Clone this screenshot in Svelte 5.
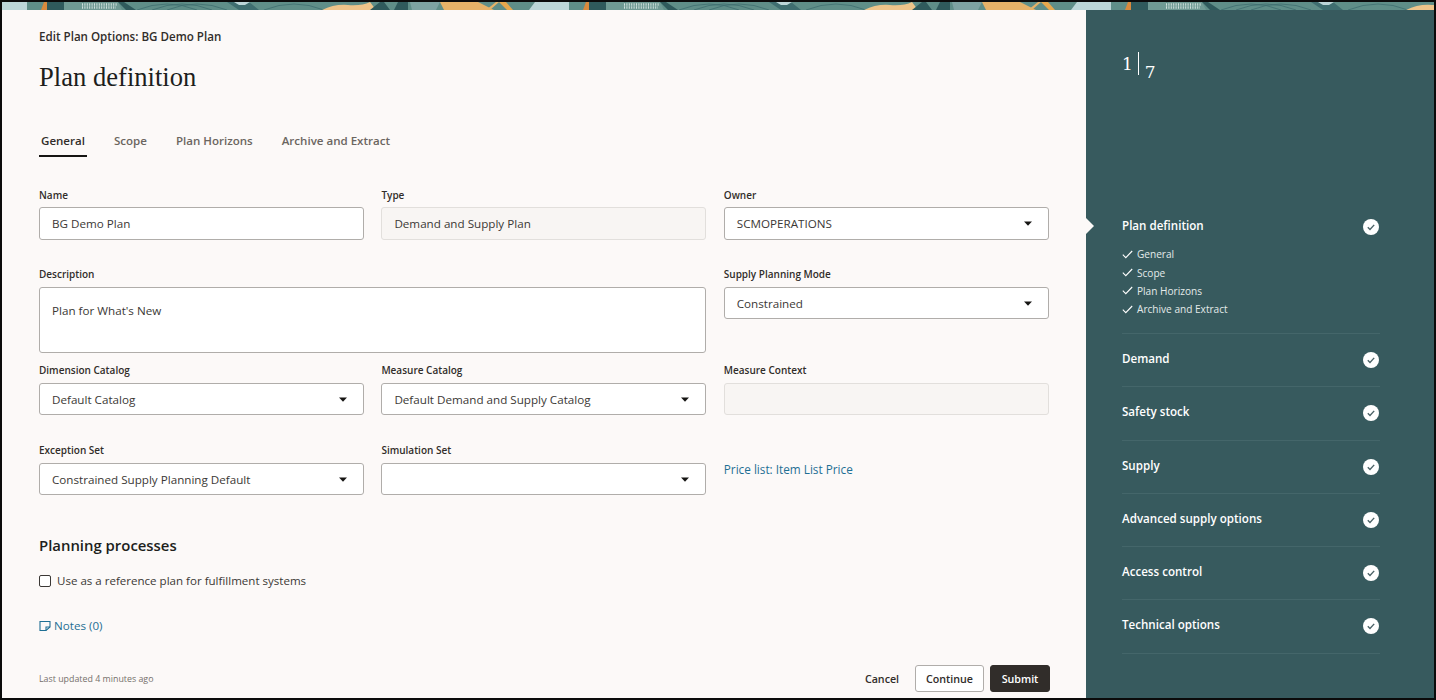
<script>
    const tabs = ['General', 'Scope', 'Plan Horizons', 'Archive and Extract'];
    const subSteps = ['General', 'Scope', 'Plan Horizons', 'Archive and Extract'];
    const steps = ['Demand', 'Safety stock', 'Supply', 'Advanced supply options', 'Access control', 'Technical options'];
    // the banner artwork repeats every 542px
    const tileOffsets = [-542, 0, 542, 1084];
</script>

{#snippet caret()}
    <svg class="caret" width="8" height="5" viewBox="0 0 8 5"><path d="M0 0.5h8L4 4.8z" fill="#161513" /></svg>
{/snippet}

{#snippet select(value)}
    <div class="input select">
        <span>{value}</span>
        {@render caret()}
    </div>
{/snippet}

{#snippet stepCheck()}
    <svg class="step-check" width="16" height="16" viewBox="0 0 16 16">
        <circle cx="8" cy="8" r="8" fill="#fff" />
        <path d="M4.8 8.3l2.2 2.2 4.2-4.6" fill="none" stroke="#4a6266" stroke-width="1.4" />
    </svg>
{/snippet}

<div class="frame">
    <svg class="banner" width="1432" height="8" viewBox="0 0 1432 8">
        <rect width="1432" height="8" fill="#5f8e88" />
        {#each tileOffsets as x}
            <g transform="translate({x} 0)">
                <path d="M527 8l6-8h34v8z" fill="#bcd6d8" />
                <path d="M39 8l3-8h5l-2 8z" fill="#d98a3d" />
                <path d="M45 0h17v8H45z" fill="#2f5a5c" />
                <path d="M62 0h18v8H62z" fill="#6f9a94" />
                <path d="M78 8l4-8h34l4 8z" fill="#6f9a94" />
                <path d="M80 2.5h36M80 5.5h34" stroke="#cfe0dc" stroke-width="2.5" stroke-dasharray="1 1.4" />
                <path d="M116 0h6l12 8h-10z" fill="#2f5a5c" />
                <path d="M135 8q30-12 60 0M150 8q30-12 60 0M165 8q30-12 60 0" fill="none" stroke="#3f6e70" stroke-width="0.8" />
                <path d="M225 0h22l10 8h-20z" fill="#3f6e70" />
                <path d="M232 0h16l-5 3h-6z" fill="#bcd6d8" />
                <path d="M262 8q30-12 60 0" fill="none" stroke="#3f6e70" stroke-width="0.8" />
                <path d="M320 8q12-6 26-5t22-3l6 8z" fill="#eec48a" />
                <path d="M368 8l10-8h4l6 8z" fill="#2f5a5c" />
                <path d="M392 8l4-8h10v8z" fill="#2f5a5c" />
                <path d="M408 0h30l-4 8h-24z" fill="#7ea3a2" />
                <path d="M438 0h38l16 8h-50z" fill="#e6b268" />
                <path d="M484 8l10-8h3l-9 8z" fill="#e6b268" />
                <path d="M497 0h7l7 8h-6z" fill="#e6a84e" />
            </g>
        {/each}
    </svg>

    <div class="page">
        <main class="main">
            <div class="crumb">Edit Plan Options: BG Demo Plan</div>
            <h1>Plan definition</h1>

            <nav class="tabs">
                {#each tabs as tab, i}
                    <span class="tab" class:active={i === 0}>{tab}</span>
                {/each}
            </nav>

            <div class="form">
                <div class="field">
                    <label>Name</label>
                    <div class="input"><span>BG Demo Plan</span></div>
                </div>
                <div class="field">
                    <label>Type</label>
                    <div class="input readonly"><span>Demand and Supply Plan</span></div>
                </div>
                <div class="field">
                    <label>Owner</label>
                    {@render select('SCMOPERATIONS')}
                </div>

                <div class="field wide desc">
                    <label>Description</label>
                    <div class="input area"><span>Plan for What's New</span></div>
                </div>
                <div class="field desc">
                    <label>Supply Planning Mode</label>
                    {@render select('Constrained')}
                </div>

                <div class="field dim">
                    <label>Dimension Catalog</label>
                    {@render select('Default Catalog')}
                </div>
                <div class="field dim">
                    <label>Measure Catalog</label>
                    {@render select('Default Demand and Supply Catalog')}
                </div>
                <div class="field dim">
                    <label>Measure Context</label>
                    <div class="input readonly"></div>
                </div>

                <div class="field">
                    <label>Exception Set</label>
                    {@render select('Constrained Supply Planning Default')}
                </div>
                <div class="field">
                    <label>Simulation Set</label>
                    {@render select('')}
                </div>
                <div class="field price">
                    <a href="#top">Price list: Item List Price</a>
                </div>
            </div>

            <h2>Planning processes</h2>
            <div class="check-row">
                <span class="checkbox"></span>
                <span>Use as a reference plan for fulfillment systems</span>
            </div>

            <a class="notes" href="#top">
                <svg width="12" height="12" viewBox="0 0 12 12" fill="none" stroke="#1f6f94" stroke-width="1.1">
                    <path d="M1 1.5h10v5.5L7 10.5H1z" />
                    <path d="M7 10.5V7h4" />
                </svg>
                Notes (0)
            </a>

            <footer class="foot">
                <span class="updated">Last updated 4 minutes ago</span>
                <div class="actions">
                    <button class="btn plain">Cancel</button>
                    <button class="btn outline">Continue</button>
                    <button class="btn solid">Submit</button>
                </div>
            </footer>
        </main>

        <aside class="side">
            <div class="count">
                <span class="num">1</span>
                <span class="bar"></span>
                <span class="num total">7</span>
            </div>

            <div class="step current">
                <span class="pointer"></span>
                <div class="step-head">
                    <span>Plan definition</span>
                    {@render stepCheck()}
                </div>
                <ul>
                    {#each subSteps as sub}
                        <li>
                            <svg width="11" height="9" viewBox="0 0 11 9"><path d="M0.8 4.6l3 3L10.2 1" fill="none" stroke="#fff" stroke-width="1.1" /></svg>
                            {sub}
                        </li>
                    {/each}
                </ul>
            </div>

            {#each steps as step}
                <div class="step">
                    <div class="step-head">
                        <span>{step}</span>
                        {@render stepCheck()}
                    </div>
                </div>
            {/each}
        </aside>
    </div>
</div>

<style>
    :global(body) {
        margin: 0;
        background: #fff;
    }
    .frame {
        box-sizing: border-box;
        width: 1436px;
        height: 700px;
        border: 2px solid #0b0b0b;
        display: flex;
        flex-direction: column;
        font-family: "Open Sans", "Noto Sans", sans-serif;
        color: #161513;
        overflow: hidden;
    }
    .banner {
        display: block;
        flex: none;
    }
    .page {
        flex: 1;
        display: flex;
        min-height: 0;
    }
    .main {
        width: 1084px;
        box-sizing: border-box;
        padding: 0 37px;
        background: #fcf9f8;
        display: flex;
        flex-direction: column;
    }
    .crumb {
        margin-top: 18px;
        font-size: 11.6px;
        line-height: 18px;
        font-weight: 600;
        color: #312d2a;
    }
    h1 {
        margin: 15px 0 0;
        font-family: "Liberation Serif", serif;
        font-size: 26.6px;
        line-height: 32px;
        font-weight: 400;
        color: #201e1c;
    }
    .tabs {
        margin-top: 39px;
        display: flex;
        gap: 29px;
        padding-left: 2px;
    }
    .tab {
        font-size: 11.55px;
        line-height: 18px;
        padding-bottom: 7px;
        font-weight: 600;
        color: #6b6560;
        position: relative;
    }
    .tab.active {
        color: #312d2a;
    }
    .tab.active::after {
        content: "";
        position: absolute;
        left: -2px;
        right: -2px;
        bottom: 0;
        height: 2px;
        background: #161513;
    }
    .form {
        margin-top: 30px;
        display: grid;
        grid-template-columns: 325px 325px 325px;
        column-gap: 17.4px;
    }
    .field {
        display: flex;
        flex-direction: column;
        min-width: 0;
        height: 79px;
    }
    .field.wide {
        grid-column: span 2;
    }
    .field.desc {
        height: 96px;
    }
    .field.dim {
        height: 80px;
    }
    label {
        font-size: 10px;
        line-height: 16px;
        font-weight: 600;
        color: #312d2a;
        margin-bottom: 5px;
    }
    .field:nth-child(-n+3) label {
        margin-bottom: 4px;
    }
    .input {
        box-sizing: border-box;
        height: 32px;
        border: 1px solid #b0adaa;
        border-radius: 3px;
        background: #fff;
        padding: 0 12px;
        display: flex;
        align-items: center;
        justify-content: space-between;
        font-size: 11.65px;
        color: #3b3835;
    }
    .field:nth-child(-n+3) .input {
        height: 33px;
    }
    .input.readonly {
        background: #f8f5f3;
        border-color: #e2dfdc;
    }
    .input.area {
        height: 66px;
        align-items: flex-start;
        padding-top: 14px;
        line-height: 18px;
    }
    .select {
        padding-right: 16px;
    }
    .caret {
        flex: none;
    }
    .price {
        padding-top: 18px;
        box-sizing: border-box;
    }
    .price a {
        font-size: 11.75px;
        line-height: 18px;
        color: #1f6f94;
        text-decoration: none;
    }
    h2 {
        margin: 13px 0 0;
        font-size: 14.9px;
        line-height: 22px;
        font-weight: 600;
        color: #201e1c;
    }
    .check-row {
        margin-top: 16px;
        display: flex;
        align-items: center;
        gap: 6px;
        font-size: 11.55px;
        line-height: 18px;
        color: #3b3835;
    }
    .checkbox {
        box-sizing: border-box;
        width: 12px;
        height: 12px;
        border: 1px solid #3b3835;
        border-radius: 2px;
        background: #fff;
    }
    .notes {
        margin-top: 27px;
        display: flex;
        align-items: center;
        gap: 3px;
        font-size: 11.65px;
        line-height: 18px;
        color: #1f6f94;
        text-decoration: none;
    }
    .foot {
        margin-top: auto;
        margin-bottom: 6px;
        display: flex;
        align-items: center;
        justify-content: space-between;
        margin-right: -1px;
    }
    .updated {
        font-size: 8.85px;
        color: #75706b;
    }
    .actions {
        display: flex;
        gap: 6px;
        align-items: center;
    }
    .btn {
        box-sizing: border-box;
        height: 27px;
        border-radius: 3px;
        font-family: inherit;
        font-size: 10.7px;
        font-weight: 600;
        padding: 0;
        color: #312d2a;
    }
    .btn.plain {
        width: 52px;
        margin-right: 1px;
        background: none;
        border: none;
    }
    .btn.outline {
        width: 69px;
        background: #fff;
        border: 1px solid #b0adaa;
    }
    .btn.solid {
        width: 60px;
        background: #312d2a;
        border: 1px solid #312d2a;
        color: #fff;
    }
    .side {
        flex: 1;
        background: #375a5e;
        color: #fff;
        padding: 0 54px 0 36px;
        position: relative;
    }
    .count {
        margin-top: 42px;
        height: 28px;
        display: flex;
        font-family: "DejaVu Serif", serif;
    }
    .num {
        font-size: 17px;
        line-height: 24px;
    }
    .bar {
        width: 1px;
        height: 23px;
        background: #fff;
        margin: 0 6px 0 5px;
    }
    .total {
        margin-top: 8px;
    }
    .step {
        position: relative;
        border-bottom: 1px solid #44666a;
        height: 53.3px;
        box-sizing: border-box;
        padding-top: 17px;
    }
    .step.current {
        margin-top: 138px;
        height: 116px;
        padding-top: 0;
    }
    .pointer {
        position: absolute;
        left: -36px;
        top: 0;
        width: 0;
        height: 0;
        border-left: 8px solid #fcf9f8;
        border-top: 8px solid transparent;
        border-bottom: 8px solid transparent;
    }
    .step-head {
        display: flex;
        align-items: center;
        justify-content: space-between;
        font-size: 11.6px;
        line-height: 16px;
        font-weight: 600;
    }
    .step-check {
        margin-right: 1px;
        position: relative;
        top: 1px;
        flex: none;
    }
    ul {
        list-style: none;
        margin: 11px 0 0;
        padding: 0;
    }
    li {
        display: flex;
        align-items: center;
        gap: 4px;
        height: 18.4px;
        font-size: 10.1px;
        color: #e4eaea;
    }
</style>
